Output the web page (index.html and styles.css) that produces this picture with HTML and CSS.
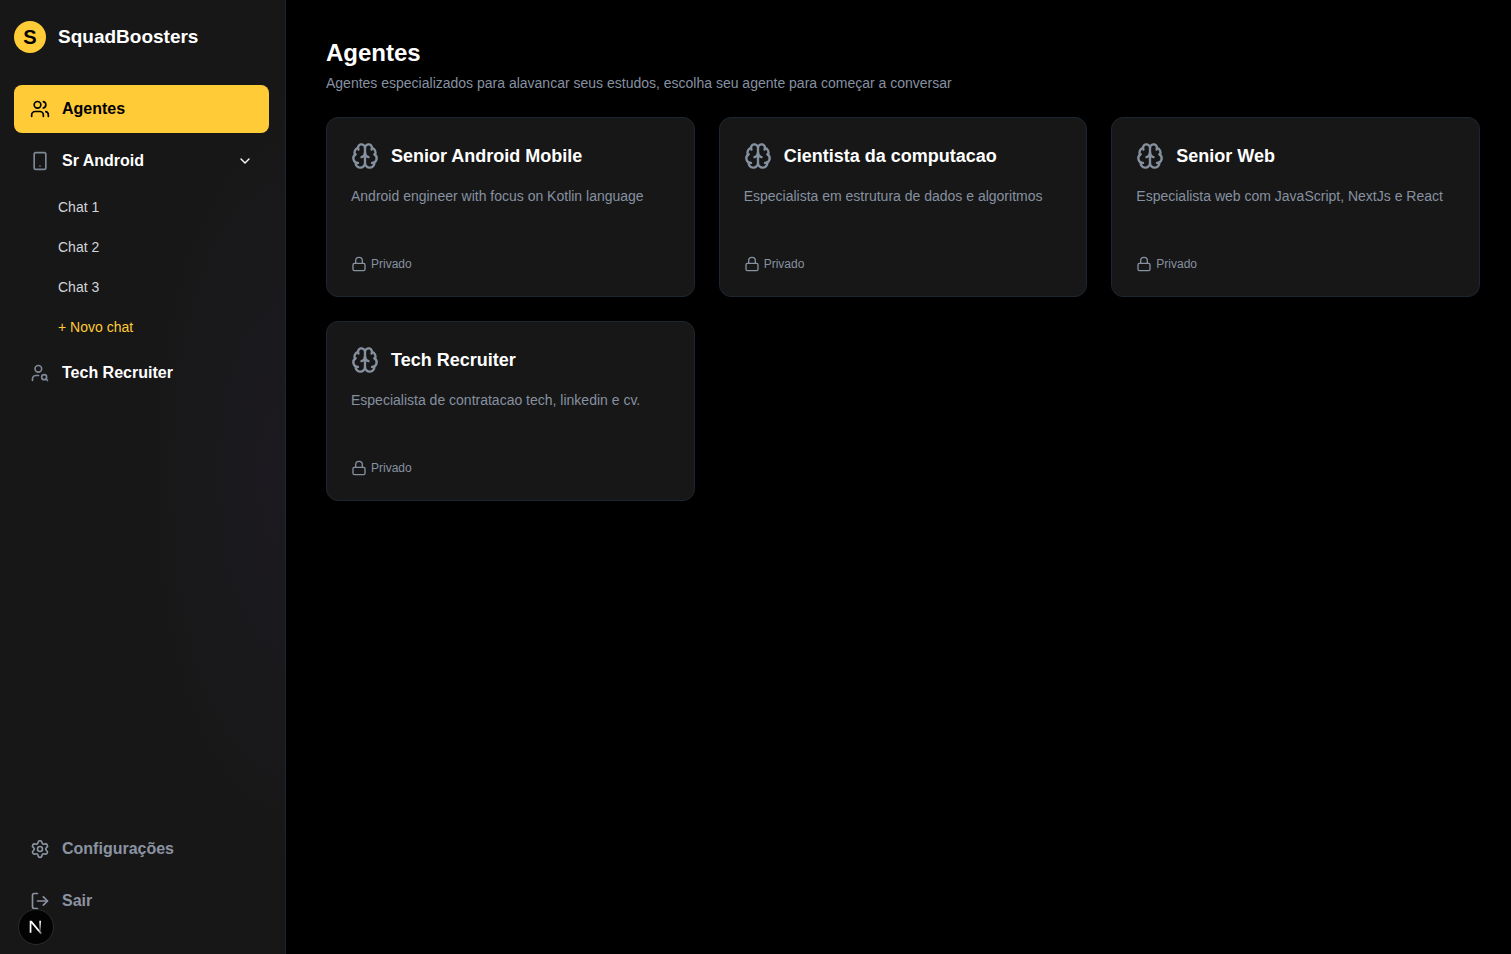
FILE: index.html
```html
<!DOCTYPE html>
<html lang="pt-BR">
<head>
<meta charset="utf-8">
<meta name="viewport" content="width=device-width, initial-scale=1">
<title>SquadBoosters - Agentes</title>
<link rel="stylesheet" href="styles.css">
</head>
<body>
<svg class="sprite" aria-hidden="true">
  <symbol id="brain" viewBox="0 0 24 24"><path d="M12 18V5"/><path d="M15 13a4.17 4.17 0 0 1-3-4 4.17 4.17 0 0 1-3 4"/><path d="M17.598 6.5A3 3 0 1 0 12 5a3 3 0 1 0-5.598 1.5"/><path d="M17.997 5.125a4 4 0 0 1 2.526 5.77"/><path d="M18 18a4 4 0 0 0 2-7.464"/><path d="M19.967 17.483A4 4 0 1 1 12 18a4 4 0 1 1-7.967-.517"/><path d="M6 18a4 4 0 0 1-2-7.464"/><path d="M6.003 5.125a4 4 0 0 0-2.526 5.77"/></symbol>
  <symbol id="lock" viewBox="0 0 24 24"><rect width="18" height="11" x="3" y="11" rx="2"/><path d="M7 11V7a5 5 0 0 1 10 0v4"/></symbol>
</svg>
<div class="app">
  <aside class="sidebar">
    <a class="brand" href="#"><span class="brand-mark">S</span><span class="brand-name">SquadBoosters</span></a>
    <nav class="nav" aria-label="Principal">
      <a class="nav-item active" href="#" aria-current="page">
        <svg class="icon" viewBox="0 0 24 24" aria-hidden="true"><path d="M16 21v-2a4 4 0 0 0-4-4H6a4 4 0 0 0-4 4v2"/><circle cx="9" cy="7" r="4"/><path d="M22 21v-2a4 4 0 0 0-3-3.87"/><path d="M16 3.13a4 4 0 0 1 0 7.75"/></svg>
        Agentes
      </a>
      <button class="nav-item" type="button" aria-expanded="true" aria-controls="chats">
        <svg class="icon muted" viewBox="0 0 24 24" aria-hidden="true"><rect width="14" height="20" x="5" y="2" rx="2"/><path d="M12 18h.01"/></svg>
        Sr Android
        <svg class="chevron" viewBox="0 0 24 24" aria-hidden="true"><path d="m6 9 6 6 6-6"/></svg>
      </button>
      <div class="chats" id="chats">
        <a class="chat" href="#">Chat 1</a>
        <a class="chat" href="#">Chat 2</a>
        <a class="chat" href="#">Chat 3</a>
        <button class="chat new-chat" type="button">+ Novo chat</button>
      </div>
      <a class="nav-item" href="#">
        <svg class="icon muted" viewBox="0 0 24 24" aria-hidden="true"><circle cx="10" cy="7" r="4"/><path d="M10.3 15H7a4 4 0 0 0-4 4v2"/><circle cx="17" cy="17" r="3"/><path d="m21 21-1.9-1.9"/></svg>
        Tech Recruiter
      </a>
    </nav>
    <div class="nav nav-footer">
      <a class="nav-item secondary" href="#">
        <svg class="icon" viewBox="0 0 24 24" aria-hidden="true"><path d="M9.671 4.136a2.34 2.34 0 0 1 4.659 0 2.34 2.34 0 0 0 3.319 1.915 2.34 2.34 0 0 1 2.33 4.033 2.34 2.34 0 0 0 0 3.831 2.34 2.34 0 0 1-2.33 4.033 2.34 2.34 0 0 0-3.319 1.915 2.34 2.34 0 0 1-4.659 0 2.34 2.34 0 0 0-3.32-1.915 2.34 2.34 0 0 1-2.33-4.033 2.34 2.34 0 0 0 0-3.831A2.34 2.34 0 0 1 6.35 6.051a2.34 2.34 0 0 0 3.319-1.915"/><circle cx="12" cy="12" r="3"/></svg>
        Configurações
      </a>
      <button class="nav-item secondary" type="button">
        <svg class="icon" viewBox="0 0 24 24" aria-hidden="true"><path d="M9 21H5a2 2 0 0 1-2-2V5a2 2 0 0 1 2-2h4"/><path d="m16 17 5-5-5-5"/><path d="M21 12H9"/></svg>
        Sair
      </button>
    </div>
  </aside>
  <main class="main">
    <h1 class="title">Agentes</h1>
    <p class="subtitle">Agentes especializados para alavancar seus estudos, escolha seu agente para começar a conversar</p>
    <div class="cards">
      <article class="card">
        <h2 class="card-title"><svg class="brain" aria-hidden="true"><use href="#brain"/></svg>Senior Android Mobile</h2>
        <p class="card-text">Android engineer with focus on Kotlin language</p>
        <p class="privacy"><svg class="lock" aria-hidden="true"><use href="#lock"/></svg>Privado</p>
      </article>
      <article class="card">
        <h2 class="card-title"><svg class="brain" aria-hidden="true"><use href="#brain"/></svg>Cientista da computacao</h2>
        <p class="card-text">Especialista em estrutura de dados e algoritmos</p>
        <p class="privacy"><svg class="lock" aria-hidden="true"><use href="#lock"/></svg>Privado</p>
      </article>
      <article class="card">
        <h2 class="card-title"><svg class="brain" aria-hidden="true"><use href="#brain"/></svg>Senior Web</h2>
        <p class="card-text">Especialista web com JavaScript, NextJs e React</p>
        <p class="privacy"><svg class="lock" aria-hidden="true"><use href="#lock"/></svg>Privado</p>
      </article>
      <article class="card">
        <h2 class="card-title"><svg class="brain" aria-hidden="true"><use href="#brain"/></svg>Tech Recruiter</h2>
        <p class="card-text">Especialista de contratacao tech, linkedin e cv.</p>
        <p class="privacy"><svg class="lock" aria-hidden="true"><use href="#lock"/></svg>Privado</p>
      </article>
    </div>
  </main>
</div>
<button class="dev-badge" type="button" aria-label="Next.js">
  <svg class="dev-logo" viewBox="0 0 34 34" aria-hidden="true">
    <defs>
      <linearGradient id="fade-diagonal" x1="11" y1="11" x2="23" y2="25" gradientUnits="userSpaceOnUse"><stop offset="0.65" stop-color="#fff"/><stop offset="1" stop-color="#fff" stop-opacity="0.2"/></linearGradient>
      <linearGradient id="fade-bar" x1="21" y1="11" x2="21" y2="22" gradientUnits="userSpaceOnUse"><stop stop-color="#fff"/><stop offset="1" stop-color="#fff" stop-opacity="0.1"/></linearGradient>
    </defs>
    <path d="M10.700 10.700H12.700L23 23.200L21.600 24.200L12.400 13.300V22.800H10.700Z" fill="url(#fade-diagonal)" stroke="none"/>
    <path d="M20.300 10.700H22V22L20.300 20Z" fill="url(#fade-bar)" stroke="none"/>
  </svg>
</button>
</body>
</html>
```
FILE: styles.css
```css
* { box-sizing: border-box; }

body {
  margin: 0;
  background: #000;
  color: #fff;
  font-family: "Liberation Sans", Arial, sans-serif;
  font-size: 14px;
  line-height: 20px;
}

h1, h2, p { margin: 0; }
a { color: inherit; text-decoration: none; }
button { border: 0; background: none; color: inherit; font: inherit; text-align: left; cursor: pointer; }

svg {
  flex: none;
  fill: none;
  stroke: currentColor;
  stroke-width: 2;
  stroke-linecap: round;
  stroke-linejoin: round;
}

.sprite { display: none; }
.app { display: flex; min-height: 100vh; }

.sidebar {
  display: flex;
  flex: none;
  flex-direction: column;
  width: 286px;
  padding: 21px 16px 29px 14px;
  border-right: 1px solid #1c2630;
  background: radial-gradient(ellipse 150px 390px at 100% 50%, #1c1a20, #171717) #171717;
}

.brand { display: flex; align-items: center; gap: 12px; margin-bottom: 32px; font-weight: 700; }

.brand-mark {
  display: grid;
  place-items: center;
  width: 32px;
  height: 32px;
  border-radius: 50%;
  background: #ffcb37;
  color: #000;
  font-size: 20px;
}

.brand-name { font-size: 19px; line-height: 28px; }

.nav { display: flex; flex-direction: column; gap: 4px; }
.nav-footer { margin-top: auto; }

.nav-item {
  display: flex;
  align-items: center;
  gap: 12px;
  padding: 12px 16px;
  border-radius: 8px;
  font-size: 16px;
  font-weight: 700;
  line-height: 24px;
}

.nav-item.active { background: #ffcb37; color: #000; }
.nav-item.secondary { color: #8b93a1; }
.icon { width: 20px; height: 20px; }
.muted { color: #7d8796; }
.chevron { width: 16px; height: 16px; margin-left: auto; }

.chats { display: flex; flex-direction: column; gap: 4px; padding-left: 32px; }
.chat { padding: 8px 12px; color: #d1d5db; }
.new-chat { color: #ffcb37; }

.main { flex: 1; min-width: 0; padding: 37px 31px 32px 40px; }
.title { font-size: 24px; line-height: 32px; }
.subtitle { margin-top: 4px; color: #8691a0; }

.cards {
  display: grid;
  grid-template-columns: repeat(3, minmax(0, 1fr));
  gap: 24px;
  margin-top: 24px;
}

.card {
  display: flex;
  flex-direction: column;
  min-height: 180px;
  padding: 24px;
  border: 1px solid #1c2630;
  border-radius: 12px;
  background: #171717;
}

.card-title { display: flex; align-items: center; gap: 12px; font-size: 18px; line-height: 28px; }
.brain { width: 28px; height: 28px; color: #8691a0; }
.card-text { margin-top: 16px; color: #8691a0; }
.privacy { display: flex; align-items: center; gap: 4px; margin-top: auto; color: #8691a0; font-size: 12px; line-height: 16px; }
.lock { width: 16px; height: 16px; }

.dev-badge {
  position: fixed;
  bottom: 9px;
  left: 18px;
  display: grid;
  place-items: center;
  width: 36px;
  height: 36px;
  padding: 0;
  border: 1px solid #2c2c2c;
  border-radius: 50%;
  background: #030303;
}

.dev-logo { width: 34px; height: 34px; }
```
